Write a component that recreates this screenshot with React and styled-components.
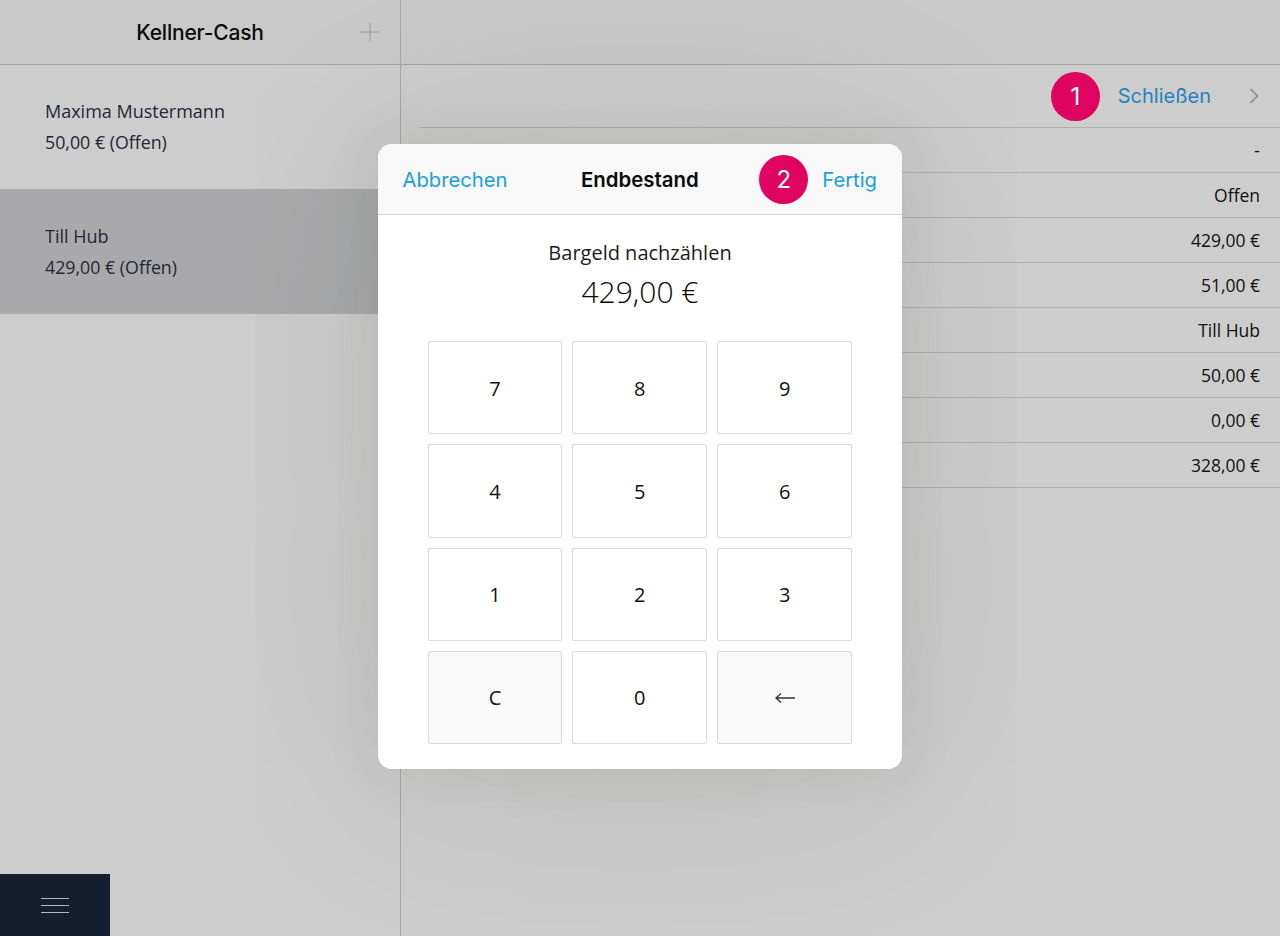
import styled, { createGlobalStyle } from 'styled-components'

const GlobalStyle = createGlobalStyle`
    html, body { margin:0; padding:0; height:100%; }
    body { background:#cdcdcd; font-family:"Open Sans", sans-serif; overflow:hidden; }
`

const PEOPLE = [
    { name:'Maxima Mustermann', amount:'50,00 € (Offen)' },
    { name:'Till Hub', amount:'429,00 € (Offen)', active:true },
]
const VALUES = ['-', 'Offen', '429,00 €', '51,00 €', 'Till Hub', '50,00 €', '0,00 €', '328,00 €']
const KEYS = ['7', '8', '9', '4', '5', '6', '1', '2', '3', 'C', '0']

const App = () => (
    <Page>
        <GlobalStyle />
        <Sidebar>
            <SideHeader>
                <SideTitle>Kellner-Cash</SideTitle>
                <PlusButton viewBox='0 0 20 20'>
                    <path d='M10 0.5V19.5M0.5 10H19.5' stroke='#9c9c9c' strokeWidth='1' fill='none' />
                </PlusButton>
            </SideHeader>
            <PersonList>
                {PEOPLE.map((person, i) => (
                    <Person $active={person.active} key={i}>
                        <span>{person.name}</span>
                        <PersonAmount>{person.amount}</PersonAmount>
                    </Person>
                ))}
            </PersonList>
            <MenuButton>
                <MenuBar /><MenuBar /><MenuBar />
            </MenuButton>
        </Sidebar>

        <Main>
            <MainHeader />
            <Content>
                <CloseRow>
                    <CloseBadge>1</CloseBadge>
                    <CloseLink>Schließen</CloseLink>
                    <Chevron viewBox='0 0 10 16'>
                        <path d='M1.5 1L8.5 8L1.5 15' stroke='#979797' strokeWidth='1.8' fill='none' />
                    </Chevron>
                </CloseRow>
                {VALUES.map((value, i) => <ValueRow key={i}>{value}</ValueRow>)}
            </Content>
        </Main>

        <Modal>
            <ModalHeader>
                <ModalLink>Abbrechen</ModalLink>
                <ModalTitle>Endbestand</ModalTitle>
                <ModalActions>
                    <Badge>2</Badge>
                    <ModalLink>Fertig</ModalLink>
                </ModalActions>
            </ModalHeader>
            <ModalLabel>Bargeld nachzählen</ModalLabel>
            <ModalAmount>429,00 €</ModalAmount>
            <Keypad>
                {KEYS.map((key) => (
                    <Key $muted={key === 'C'} key={key}>{key}</Key>
                ))}
                <Key $muted>
                    <BackArrow viewBox='0 0 20 12'>
                        <path d='M20 6H1M6 1.5L1 6L6 10.5' stroke='#333' strokeWidth='1.3' fill='none' />
                    </BackArrow>
                </Key>
            </Keypad>
        </Modal>
    </Page>
)

export default App

const Page = styled.div`
    position:relative;
    display:flex;
    width:1280px;
    height:936px;
    overflow:hidden;
    background:#cdcdcd;
`

const Sidebar = styled.div`
    position:relative;
    display:flex;
    flex-direction:column;
    width:401px;
    flex-shrink:0;
    box-sizing:border-box;
    border-right:1px solid #a9a9a9;
`

const SideHeader = styled.div`
    position:relative;
    display:flex;
    align-items:center;
    justify-content:center;
    height:65px;
    box-sizing:border-box;
    padding-top:1px;
    background:#c9c9c9;
    border-bottom:1px solid #a3a3a3;
`

const SideTitle = styled.div`
    font-family:Inter, sans-serif;
    font-size:21px;
    font-weight:500;
    color:#0a0a0a;
    letter-spacing:-0.2px;
`

const PlusButton = styled.svg`
    position:absolute;
    right:20px;
    top:22px;
    width:20px;
    height:20px;
`

const PersonList = styled.div`
    display:flex;
    flex-direction:column;
    flex:1;
`

const Person = styled.div`
    display:flex;
    flex-direction:column;
    justify-content:center;
    gap:8px;
    height:${(p) => (p.$active ? '125px' : '124px')};
    padding-left:45px;
    box-sizing:border-box;
    font-size:18px;
    line-height:23px;
    color:#1e2835;
    background:${(p) => (p.$active ? '#a9a9ab' : 'transparent')};
`

const PersonAmount = styled.span`
    font-size:17.8px;
`

const MenuButton = styled.div`
    display:flex;
    flex-direction:column;
    align-items:center;
    justify-content:center;
    gap:6px;
    width:110px;
    height:62px;
    background:#141e2c;
`

const MenuBar = styled.div`
    width:28px;
    height:1px;
    background:#b4b8bd;
`

const Main = styled.div`
    flex:1;
    display:flex;
    flex-direction:column;
`

const MainHeader = styled.div`
    height:65px;
    box-sizing:border-box;
    background:#c9c9c9;
    border-bottom:1px solid #a3a3a3;
`

const Content = styled.div`
    display:flex;
    flex-direction:column;
    margin-left:19px;
`

const CloseRow = styled.div`
    display:flex;
    align-items:center;
    justify-content:flex-end;
    height:63px;
    box-sizing:border-box;
    padding-right:21px;
    border-bottom:1px solid #b1b1b1;
`

const CloseLink = styled.span`
    font-family:Inter, sans-serif;
    font-size:20px;
    color:#2383bd;
    margin-left:18px;
    margin-right:38px;
`

const Chevron = styled.svg`
    width:10px;
    height:16px;
`

const Badge = styled.span`
    display:flex;
    align-items:center;
    justify-content:center;
    width:49px;
    height:49px;
    border-radius:50%;
    background:#df045f;
    color:#fff;
    font-family:Inter, sans-serif;
    font-size:24px;
`

const CloseBadge = styled(Badge)`
    margin-top:1px;
`

const ValueRow = styled.div`
    display:flex;
    align-items:center;
    justify-content:flex-end;
    height:45px;
    box-sizing:border-box;
    padding-right:20px;
    border-bottom:1px solid #b1b1b1;
    font-size:17.5px;
    color:#111;
`

const Modal = styled.div`
    position:absolute;
    left:378px;
    top:144px;
    width:524px;
    height:624.5px;
    display:flex;
    flex-direction:column;
    align-items:center;
    background:#fff;
    border-radius:14px;
    overflow:hidden;
    box-shadow:0 0 60px rgba(30,40,20,0.09), 0 8px 210px rgba(30,40,20,0.11);
`

const ModalHeader = styled.div`
    display:grid;
    grid-template-columns:1fr auto 1fr;
    align-items:center;
    width:100%;
    height:71px;
    flex-shrink:0;
    box-sizing:border-box;
    padding:0 25px 0 24.5px;
    background:#f8f8f8;
    border-bottom:1px solid #d8d8d8;
`

const ModalLink = styled.span`
    font-family:Inter, sans-serif;
    font-size:20.2px;
    color:#18a0dc;
`

const ModalTitle = styled.span`
    font-family:Inter, sans-serif;
    font-size:20.4px;
    font-weight:600;
    color:#0a0a0a;
`

const ModalActions = styled.div`
    display:flex;
    align-items:center;
    justify-content:flex-end;
    gap:14px;
`

const ModalLabel = styled.div`
    margin-top:24px;
    font-size:20px;
    line-height:28px;
    color:#1c1c1c;
`

const ModalAmount = styled.div`
    margin-top:3px;
    font-size:30px;
    line-height:44px;
    font-weight:300;
    color:#0a0a0a;
`

const Keypad = styled.div`
    display:grid;
    grid-template-columns:134.4px 135px 135px;
    grid-auto-rows:93.25px;
    gap:10px;
    margin-top:27px;
`

const Key = styled.div`
    display:flex;
    align-items:center;
    justify-content:center;
    box-sizing:border-box;
    padding-top:1px;
    border:1px solid #dcdcdc;
    border-radius:2px;
    background:${(p) => (p.$muted ? '#f9f9f9' : '#fff')};
    font-size:20px;
    color:#111;
`

const BackArrow = styled.svg`
    width:20px;
    height:12px;
`
